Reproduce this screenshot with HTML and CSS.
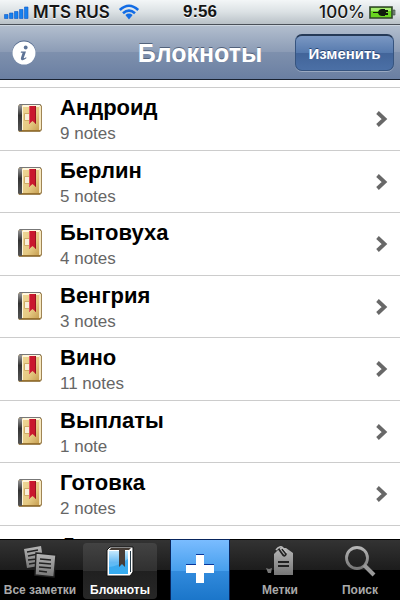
FILE: index.html
```html
<!DOCTYPE html>
<html lang="ru">

<head>
    <meta charset="utf-8">
    <meta name="viewport" content="width=device-width, initial-scale=1">
    <title>Блокноты</title>
    <link rel="stylesheet" href="styles.css">
</head>

<body>
    <!-- shared icons -->
    <svg class="defs" width="0" height="0">
        <defs>
            <linearGradient id="cover" x1="0" y1="0" x2="1" y2="1">
                <stop offset="0" stop-color="#f0d896" />
                <stop offset=".6" stop-color="#e5c983" />
                <stop offset="1" stop-color="#c49b4d" />
            </linearGradient>
            <linearGradient id="spine" x1="0" y1="0" x2="0" y2="1">
                <stop offset="0" stop-color="#999" />
                <stop offset=".4" stop-color="#333" />
                <stop offset="1" stop-color="#555" />
            </linearGradient>
            <linearGradient id="metal" x1="0" y1="0" x2="0" y2="1">
                <stop offset="0" stop-color="#b5b5b5" />
                <stop offset="1" stop-color="#777" />
            </linearGradient>
            <linearGradient id="blue" x1="0" y1="0" x2="0" y2="1">
                <stop offset="0" stop-color="#c4e8fd" />
                <stop offset=".5" stop-color="#64b9f2" />
                <stop offset="1" stop-color="#49c4ff" />
            </linearGradient>
            <symbol id="book" viewBox="0 0 26 30">
                <path d="M3 1h20l2 2v24l-2 2H2l-1-2V3z" fill="#a08555" />
                <path d="M3 1h20l1 1H2z" fill="#777" />
                <path d="M1 3l2-1h2v26H2l-1-1z" fill="url(#spine)" />
                <path d="M5 2h18v26H5z" fill="url(#cover)" />
                <path d="M5 3h1v25H5zM6 2h17v2H6z" fill="#fff6dc" />
                <path d="M22 3h2v23l-2 2z" fill="#f5e7bf" />
                <path d="M5 27h18v1H5z" fill="#98722f" />
                <path d="M7.500 10.500h5v7h-5z" fill="#f8f0d9" stroke="#d0ad66" />
                <path d="M12 3h7v18l-3.500-3L12 21z" fill="#c9182e" />
                <path d="M12 3h1v17l-1 1z" fill="#e55361" />
                <path d="M18 3h1v18l-1-1z" fill="#981121" />
            </symbol>
            <symbol id="chevron" viewBox="0 0 12 16">
                <path d="M1.500 1.500l7 6.500-7 6.500" fill="none" stroke="#686868" stroke-width="3.800" />
            </symbol>
        </defs>
    </svg>

    <div class="status">
        <div class="carrier">
            <svg width="25" height="13" viewBox="0 0 25 13">
                <g fill="#1680ee" stroke="#1059c8" stroke-width=".6">
                    <path d="M.5 8.500h3.500v4H.5zM5.500 7h3.500v5.500H5.500zM10.500 5.500h3.500v7h-3.500zM15.500 3.500h3.500v9h-3.500zM20.500 1h3.500v11.500h-3.500z" />
                </g>
            </svg>
            <span>MTS RUS</span>
            <svg class="wifi" width="22" height="16" viewBox="0 0 22 16">
                <g fill="none" stroke="#126ce5" stroke-width="2.600">
                    <path d="M1.800 6Q11-2.500 20.200 6M5 9.200q6-5.200 12 0M8.200 12q2.800-2.200 5.600 0" />
                </g>
                <path d="M8.600 12.600q2.400-1.500 4.800 0L11 15.500z" fill="#126ce5" />
            </svg>
        </div>
        <div class="time">9:56</div>
        <div class="power">
            <span>100%</span>
            <svg width="27" height="13" viewBox="0 0 27 13">
                <path d="M1 1h22v11H1z" fill="#69d51e" stroke="#30442b" stroke-width="1.600" />
                <path d="M2 2h20v3H2z" fill="#a6ec70" />
                <path d="M24 4h2v5h-2z" fill="#82908a" stroke="#30442b" stroke-width=".6" />
                <path d="M4 6h5q1-3 4-3h3v1h3v2h-2v1h2v2h-3v1h-3q-3 0-4-3H4z" fill="#101c0c" />
            </svg>
        </div>
    </div>

    <header class="navbar">
        <button class="info" type="button" aria-label="Информация">
            <svg width="24" height="24" viewBox="0 0 24 24">
                <circle cx="12" cy="12" r="11.500" fill="#fff" />
                <circle cx="13.700" cy="6.500" r="1.900" fill="#5d7396" />
                <path d="M9 10.500h5l-2.200 6.300q-.3 1.200 2.200-.5l.6.800Q11.500 20 9.500 19q-1-.7-.5-2.200l1.600-5H8.700z" fill="#5d7396" />
            </svg>
        </button>
        <h1>Блокноты</h1>
        <button class="edit" type="button">Изменить</button>
    </header>

    <main>
        <ul class="list">
            <li><a href="#"><svg class="book"><use href="#book" /></svg><span class="text"><b>Андроид</b><small>9 notes</small></span><svg class="chevron"><use href="#chevron" /></svg></a></li>
            <li><a href="#"><svg class="book"><use href="#book" /></svg><span class="text"><b>Берлин</b><small>5 notes</small></span><svg class="chevron"><use href="#chevron" /></svg></a></li>
            <li><a href="#"><svg class="book"><use href="#book" /></svg><span class="text"><b>Бытовуха</b><small>4 notes</small></span><svg class="chevron"><use href="#chevron" /></svg></a></li>
            <li><a href="#"><svg class="book"><use href="#book" /></svg><span class="text"><b>Венгрия</b><small>3 notes</small></span><svg class="chevron"><use href="#chevron" /></svg></a></li>
            <li><a href="#"><svg class="book"><use href="#book" /></svg><span class="text"><b>Вино</b><small>11 notes</small></span><svg class="chevron"><use href="#chevron" /></svg></a></li>
            <li><a href="#"><svg class="book"><use href="#book" /></svg><span class="text"><b>Выплаты</b><small>1 note</small></span><svg class="chevron"><use href="#chevron" /></svg></a></li>
            <li><a href="#"><svg class="book"><use href="#book" /></svg><span class="text"><b>Готовка</b><small>2 notes</small></span><svg class="chevron"><use href="#chevron" /></svg></a></li>
            <li><a href="#"><svg class="book"><use href="#book" /></svg><span class="text"><b>Дом</b></span><svg class="chevron"><use href="#chevron" /></svg></a></li>
        </ul>
    </main>

    <nav class="tabbar">
        <a class="tab" href="#">
            <svg width="36" height="36" viewBox="0 0 36 36">
                <path d="M2 5l17-3 3 19-17 3z" fill="url(#metal)" />
                <path d="M5 8l11-2M6 12l10-2M6 16l9-1M7 20l6-1" stroke="#222" stroke-width="1.400" />
                <path d="M14 9l20 2-2 22-19-2z" fill="url(#metal)" stroke="#222" stroke-width="1.400" />
                <path d="M18 15l11 1M17 19l12 1M17 23l12 1M17 27l8 1" stroke="#222" stroke-width="1.600" />
            </svg>
            <span>Все заметки</span>
        </a>
        <a class="tab active" href="#">
            <svg width="36" height="36" viewBox="0 0 36 36">
                <path d="M5 6l3-3h23v25l-3 4H5z" fill="#fff" stroke="#111" />
                <path d="M7 7h19v23H7z" fill="url(#blue)" />
                <path d="M7 23q9-1 19-8v15H7z" fill="#289ce8" opacity=".6" />
                <path d="M7 6l2-2h20l-2 2z" fill="#443b34" />
                <path d="M28 7h1v21h-1z" fill="#273b48" />
                <path d="M17 5h6v18l-3-3-3 3z" fill="#463c37" />
            </svg>
            <span>Блокноты</span>
        </a>
        <button class="add" type="button" aria-label="Добавить">
            <svg width="30" height="30" viewBox="0 0 30 30">
                <path d="M11 0h8v10h10v9H19v10h-8V19H1v-9h10z" fill="#08369b" />
                <path d="M11 1h8v10h10v8H19v10h-8V19H1v-8h10z" fill="#fff" />
            </svg>
        </button>
        <a class="tab" href="#">
            <svg width="36" height="36" viewBox="0 0 36 36">
                <path d="M12 10l6-6h6l7 5v22H12z" fill="url(#metal)" />
                <path d="M16 4l5 7q2 2 3-1l-4-5" fill="none" stroke="#222" stroke-width="1.800" />
                <path d="M14 6q4-5 7-2l4 5" fill="none" stroke="#bbb" stroke-width="1.500" />
                <path d="M16 18h11M16 22h11" stroke="#222" stroke-width="1.800" />
                <path d="M4 24l3 1 3-1-1 5H6z" fill="#777" />
            </svg>
            <span>Метки</span>
        </a>
        <a class="tab" href="#">
            <svg width="36" height="36" viewBox="0 0 36 36">
                <circle cx="15" cy="14" r="10.500" fill="none" stroke="url(#metal)" stroke-width="2.800" />
                <path d="M22 21l10 10" stroke="#999" stroke-width="4" />
            </svg>
            <span>Поиск</span>
        </a>
    </nav>
</body>

</html>
```
FILE: styles.css
```css
* {
    padding: 0;
    margin: 0;
    box-sizing: border-box;
}

body {
    display: flex;
    flex-direction: column;
    height: 100vh;
    overflow: hidden;
    background: #fff;
    font-family: "Liberation Sans", Arial, sans-serif;
}

a {
    color: inherit;
    text-decoration: none;
}

button {
    border: 0;
    font-family: inherit;
    cursor: pointer;
}

svg {
    display: block;
    flex: none;
}

.defs {
    position: absolute;
}

/* status bar */
.status {
    display: grid;
    grid-template-columns: 1fr auto 1fr;
    align-items: center;
    flex: none;
    height: 25px;
    padding: 0 4px;
    background: linear-gradient(#f3f6f7, #dbe1e4 50%, #b9c1c7);
    border-bottom: 1px solid #4a5058;
    color: #161616;
    font-size: 17px;
    line-height: 24px;
    text-shadow: 0 1px 0 #fff;
}

.carrier,
.power {
    display: flex;
    align-items: center;
    gap: 4px;
}

.carrier span {
    font-family: Inter, "Liberation Sans", sans-serif;
    font-weight: 600;
}

.carrier .wifi {
    margin-left: 4px;
}

.time {
    font-weight: bold;
}

.power {
    justify-content: flex-end;
}

.power span {
    font-family: Inter, "Liberation Sans", sans-serif;
    font-weight: 500;
}

/* navigation bar */
.navbar {
    display: grid;
    grid-template-columns: 1fr auto 1fr;
    align-items: center;
    flex: none;
    height: 55px;
    padding: 0 6px;
    background: linear-gradient(#b2bece, #8b9bb5 50%, #7e90ad 50%, #6a7fa2);
    border-top: 1px solid #cdd6e0;
    border-bottom: 1px solid #192231;
}

.navbar h1 {
    color: #fff;
    font-size: 25px;
    line-height: 32px;
    text-shadow: 0 -1px 0 #52627b;
}

.info {
    width: 24px;
    height: 24px;
    margin-left: 6px;
    background: none;
    filter: drop-shadow(0 -1px 0 #52698d);
}

.edit {
    justify-self: end;
    width: 99px;
    height: 37px;
    border: 1px solid #36547f;
    border-top: 2px solid #263a57;
    border-radius: 7px;
    background: linear-gradient(#7b98c3, #5579ad 50%, #426499 50%, #4b70a6);
    box-shadow: 0 1px 0 #9aa9c1;
    color: #fff;
    font-size: 15px;
    font-weight: bold;
    text-shadow: 0 -1px 0 #294674;
}

/* notebooks */
main {
    flex: 1;
    min-height: 0;
    padding-top: 7px;
    overflow: hidden;
}

.list {
    border-top: 1px solid #ccc;
    list-style: none;
}

.list li {
    height: 63px;
    border-bottom: 1px solid #ccc;
}

.list li:nth-child(even) {
    height: 62px;
}

.list a {
    display: flex;
    align-items: flex-start;
    height: 100%;
    padding: 6px 12px 0 17px;
}

.book {
    width: 26px;
    height: 30px;
    margin-top: 9px;
}

.text {
    display: flex;
    flex-direction: column;
    flex: 1;
    padding-left: 17px;
}

.text b {
    color: #000;
    font-size: 22px;
    line-height: 28px;
}

.text small {
    color: #666;
    font-size: 17px;
    line-height: 24px;
}

.chevron {
    width: 12px;
    height: 16px;
    margin-top: 17px;
}

/* tab bar */
.tabbar {
    display: grid;
    grid-template-columns: repeat(5, minmax(0, 1fr));
    flex: none;
    height: 61px;
    background: linear-gradient(#333, #1c1c1c 50%, #000 50%);
    border-top: 1px solid #000;
}

.tab {
    display: flex;
    flex-direction: column;
    align-items: center;
    margin: 3px 3px 2px;
    padding-top: 1px;
    border-radius: 4px;
    color: #aaa;
    font-size: 12px;
    font-weight: bold;
    line-height: 17px;
    white-space: nowrap;
}

.tab span {
    margin-top: 2px;
}

.tab.active {
    background: linear-gradient(#434343, #303030 50%, #202020 50%, #272727);
    color: #fff;
}

.add {
    display: flex;
    align-items: center;
    justify-content: center;
    margin: 0 11px;
    padding-bottom: 3px;
    background: linear-gradient(#7abcff, #479fed 50%, #328bdd 50%, #1a75c9);
    box-shadow: 0 0 0 1px #08245c;
}
```
